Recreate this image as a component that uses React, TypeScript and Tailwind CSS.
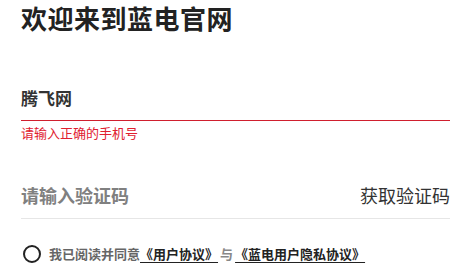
import React from "react";

export default function App() {
  return (
    <div
      className="w-[466px] h-[272px] bg-white pl-[21px] pr-[16px] overflow-hidden"
      style={{ fontFamily: '"Noto Sans CJK SC", "Noto Sans", sans-serif' }}
    >
      <h1 className="pt-[1px] h-[35px] leading-[34px] text-[26px] font-bold text-[#222] tracking-[0.5px] whitespace-nowrap">
        欢迎来到蓝电官网
      </h1>
      <div className="mt-[41px] h-[45px] flex items-center border-b border-[#d01f2e] text-[17px] font-bold text-[#333]">
        腾飞网
      </div>
      <div className="mt-[3px] h-[18px] leading-[18px] text-[13px] text-[#e0202f]">
        请输入正确的手机号
      </div>
      <div className="mt-[30px] h-[47px] flex items-center justify-between border-b border-[#e6e6e6]">
        <span className="text-[18px] font-bold text-[#808080]">请输入验证码</span>
        <span className="text-[18px] text-[#333]">获取验证码</span>
      </div>
      <div className="mt-[25px] h-[20px] flex items-center text-[13px]">
        <span className="w-[18px] h-[18px] rounded-full border-2 border-[#222] ml-[2px] mr-[8px] shrink-0" />
        <span className="font-bold text-[#666]">我已阅读并同意</span>
        <span className="font-bold text-[#222] underline underline-offset-[3px]">《用户协议》</span>
        <span className="font-bold text-[#888] mx-[2px]">与</span>
        <span className="font-bold text-[#222] underline underline-offset-[3px]">《蓝电用户隐私协议》</span>
      </div>
    </div>
  );
}
